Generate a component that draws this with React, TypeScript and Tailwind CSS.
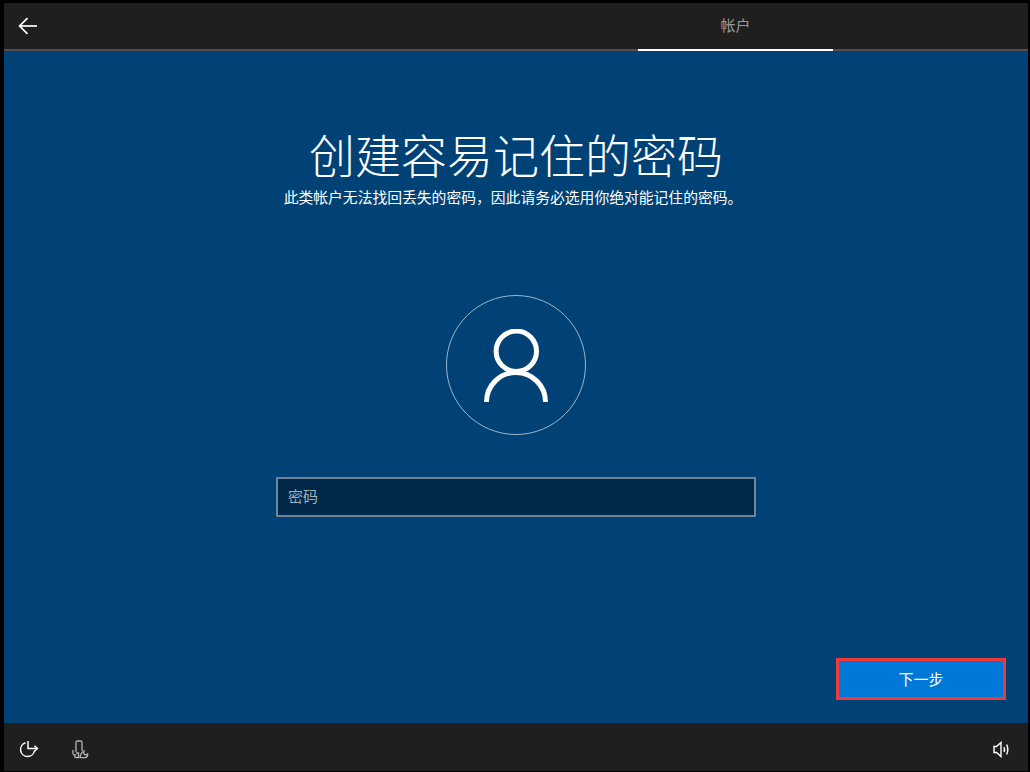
const cjk = { fontFamily: '"Noto Sans CJK SC", "Liberation Sans", sans-serif' };

function BackArrow() {
  return (
    <svg width="20" height="18" viewBox="0 0 20 18" fill="none" stroke="currentColor" strokeWidth="1.7">
      <path d="M19 9 H2" />
      <path d="M9.5 1.2 L1.6 9 L9.5 16.8" />
    </svg>
  );
}

/** 左下角的轻松使用图标 */
function EaseIcon() {
  return (
    <svg width="20" height="18" viewBox="0 0 20 18" fill="none" stroke="white" strokeWidth="1.5">
      <path d="M6.5 2.8 A7 7 0 1 0 15.5 10.5" />
      <path d="M9 1 V8.5 H18" />
      <path d="M15.5 5.8 L18.4 8.5 L15.5 11.2" />
    </svg>
  );
}

/** 语音图标 */
function MicIcon() {
  return (
    <svg width="17" height="19" viewBox="0 0 17 19" fill="none" stroke="#b4b4b4" strokeWidth="1.3">
      <path d="M4 12 V2.5 Q4 1 5.5 1 H8.5 Q10 1 10 2.5 V11" />
      <path d="M1 10 V13.5 Q1 15 2.5 15 H4" />
      <path d="M4 13 H6.5 V17.5 H4 Q2.5 17.5 2.5 16" />
      <path d="M8 17.6 H13.5 Q16 17 15.6 14 Q13.5 15.5 12 14 Q11.5 12.5 12 11 Q8.5 13 8 17.6 Z" />
    </svg>
  );
}

function SpeakerIcon() {
  return (
    <svg width="17" height="17" viewBox="0 0 17 17" fill="none" stroke="white" strokeWidth="1.4">
      <path d="M1 5.5 H3.5 L8 1.5 V15.5 L3.5 11.5 H1 Z" />
      <path d="M11 6 Q12.2 8.5 11 11" />
      <path d="M13.6 3.5 Q16 8.5 13.6 13.5" />
    </svg>
  );
}

function UserIcon() {
  return (
    <svg width="64" height="73" viewBox="0 0 64 73" fill="none" stroke="white" strokeWidth="5">
      <circle cx="32.3" cy="22.3" r="20.2" />
      <path d="M2.5 73 A29.5 29.5 0 0 1 61.5 73" />
    </svg>
  );
}

export default function App() {
  return (
    <div className="flex h-[772px] w-[1030px] flex-col overflow-hidden bg-black pb-[1px] pl-[4px] pr-[2px] pt-[3px] text-white" style={cjk}>
      {/* 顶部栏 */}
      <header className="flex h-[48px] shrink-0 items-stretch border-b-2 border-[#4f4f4f] bg-[#1f1f1f]">
        <div className="flex w-[634px] items-center pl-[14px]">
          <BackArrow />
        </div>
        <div className="relative flex w-[195px] items-center justify-center pb-[2px] text-[15px] text-[#9a9a9a]">
          帐户
          <span className="absolute -bottom-[2px] left-0 right-0 h-[2px] bg-white" />
        </div>
      </header>

      {/* 主体 */}
      <main className="flex min-h-0 flex-1 flex-col items-center bg-[#004275]">
        <h1 className="mt-[70px] text-[46px] font-light leading-[64px]">创建容易记住的密码</h1>
        <p className="mt-[2px] -translate-x-[3px] text-[14.8px] leading-[20px]">{'此类帐户无法找回丢失的密码\uFF0C因此请务必选用你绝对能记住的密码\u3002'}</p>

        <div className="mt-[88px] flex h-[140px] w-[140px] items-center justify-center rounded-full border border-[#9fb6c9]">
          <UserIcon />
        </div>

        <div className="mt-[42px] flex h-[40px] w-[480px] items-center border-2 border-[#6f8597] bg-[#00284a] px-[10px] pb-[2px] text-[15px] text-[#9fb0bd]">
          密码
        </div>

        <div className="mt-auto flex w-full justify-end pb-[23px] pr-[22px]">
          <button className="flex h-[42px] w-[170px] items-center justify-center border-[3px] border-[#f03a3a] bg-[#0078d7] text-[15px] text-white">
            下一步
          </button>
        </div>
      </main>

      {/* 底部栏 */}
      <footer className="flex h-[48px] shrink-0 items-center bg-[#1f1f1f] pl-[15px] pr-[18px] pt-[4px]">
        <EaseIcon />
        <div className="ml-[33px]">
          <MicIcon />
        </div>
        <div className="ml-auto">
          <SpeakerIcon />
        </div>
      </footer>
    </div>
  );
}
